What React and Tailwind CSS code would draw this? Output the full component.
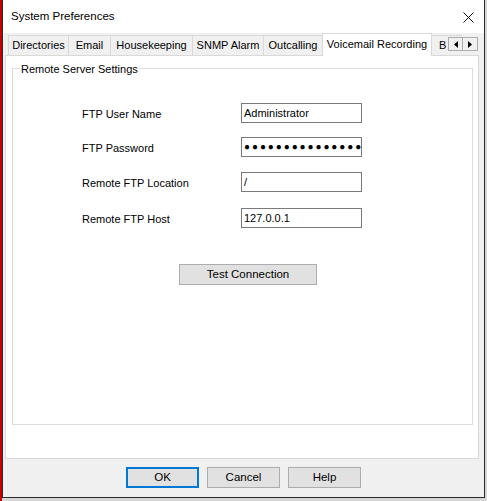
const TABS = [
  { label: "Directories", w: "w-[60px]" },
  { label: "Email", w: "w-[42px]" },
  { label: "Housekeeping", w: "w-[82px]" },
  { label: "SNMP Alarm", w: "w-[71px]" },
  { label: "Outcalling", w: "w-[59px]" },
];

const FIELDS = [
  { label: "FTP User Name", value: "Administrator", mt: "mt-[34px]" },
  { label: "FTP Password", value: "●".repeat(20), mt: "mt-[14px]", secret: true },
  { label: "Remote FTP Location", value: "/", mt: "mt-[15px]" },
  { label: "Remote FTP Host", value: "127.0.0.1", mt: "mt-[16px]" },
];

function Field({ label, value, mt, secret }) {
  return (
    <div className={`${mt} flex items-center h-[20px]`}>
      <span className="w-[159px] pt-[3px] text-[11px]">{label}</span>
      <div className="w-[121px] h-[20px] border border-[#7a7a7a] bg-white flex items-center overflow-hidden pl-[2px]">
        <span
          className={
            secret
              ? "whitespace-nowrap text-[10px] tracking-[1.9px] leading-none"
              : "whitespace-nowrap text-[11px] leading-none"
          }
        >
          {value}
        </span>
      </div>
    </div>
  );
}

function Button({ children, primary, className = "" }) {
  return (
    <button
      type="button"
      className={`h-[21px] bg-[#e1e1e1] text-[11.5px] flex items-center justify-center ${
        primary ? "border-2 border-[#0078d7]" : "border border-[#adadad]"
      } ${className}`}
    >
      {children}
    </button>
  );
}

export default function App() {
  return (
    <div className="w-[487px] h-[501px] bg-[#d6d6d6] border-l-2 border-[#c40000] font-['Liberation_Sans',Arial,sans-serif] text-black">
      <div className="w-[483px] h-[498px] border border-t-0 border-[#2b2b2b] bg-[#f0f0f0] flex flex-col">
        {/* title bar */}
        <div className="h-[33px] bg-white flex items-center justify-between pl-[8px] pr-[10px]">
          <span className="text-[11.5px] pt-[1px]">System Preferences</span>
          <svg width="11" height="11" viewBox="0 0 11 11" className="mt-[1px]">
            <path d="M0.5 0.5 L10.5 10.5 M10.5 0.5 L0.5 10.5" stroke="#111" strokeWidth="1" />
          </svg>
        </div>

        {/* tab strip */}
        <div className="relative h-[22px] flex items-end pl-[5px] z-10">
          {TABS.map((tab) => (
            <div
              key={tab.label}
              className={`${tab.w} h-[20px] border-t border-l border-[#d9d9d9] bg-[#f0f0f0] flex items-center justify-center text-[11px]`}
            >
              {tab.label}
            </div>
          ))}
          <div className="w-[110px] h-[23px] -mb-px border-x border-t border-[#d9d9d9] bg-white flex items-center justify-center text-[11px] pb-[2px]">
            Voicemail Recording
          </div>
          <div className="w-[30px] h-[20px] border-t border-[#d9d9d9] bg-[#f0f0f0] flex items-center pl-[7px] text-[11px]">
            B
          </div>
          <div className="absolute left-[445px] top-[4px] w-[30px] h-[14px] flex">
            <div className="w-[15px] h-[14px] border border-[#adadad] bg-[#f0f0f0] flex items-center justify-center">
              <svg width="4" height="7" viewBox="0 0 4 7">
                <path d="M4 0 L0 3.5 L4 7 Z" fill="#000" />
              </svg>
            </div>
            <div className="w-[15px] h-[14px] border border-l-0 border-[#adadad] bg-[#f0f0f0] flex items-center justify-center">
              <svg width="4" height="7" viewBox="0 0 4 7">
                <path d="M0 0 L4 3.5 L0 7 Z" fill="#000" />
              </svg>
            </div>
          </div>
        </div>

        {/* tab panel */}
        <div className="ml-[2px] w-[474px] h-[404px] border border-[#d9d9d9] bg-white">
          <div className="relative ml-[6px] mt-[12px] w-[461px] h-[357px] border border-[#dcdcdc]">
            <span className="absolute -top-[8px] left-[7px] bg-white px-[1px] text-[11px]">
              Remote Server Settings
            </span>
            <div className="pl-[69px] flex flex-col">
              {FIELDS.map((f) => (
                <Field key={f.label} {...f} />
              ))}
            </div>
            <Button className="mt-[36px] ml-[166px] w-[138px]">Test Connection</Button>
          </div>
        </div>

        {/* dialog buttons */}
        <div className="mt-[8px] pl-[123px] flex gap-[8px]">
          <Button primary className="w-[73px]">OK</Button>
          <Button className="w-[73px]">Cancel</Button>
          <Button className="w-[73px]">Help</Button>
        </div>
      </div>
    </div>
  );
}
